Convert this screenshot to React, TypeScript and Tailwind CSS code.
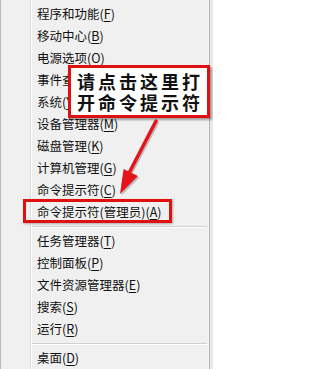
import React from 'react';

type Item = { label: string; key: string };

const groups: Item[][] = [
  [
    { label: '程序和功能', key: 'F' },
    { label: '移动中心', key: 'B' },
    { label: '电源选项', key: 'O' },
    { label: '事件查看器', key: 'V' },
    { label: '系统', key: 'Y' },
    { label: '设备管理器', key: 'M' },
    { label: '磁盘管理', key: 'K' },
    { label: '计算机管理', key: 'G' },
    { label: '命令提示符', key: 'C' },
    { label: '命令提示符(管理员)', key: 'A' },
  ],
  [
    { label: '任务管理器', key: 'T' },
    { label: '控制面板', key: 'P' },
    { label: '文件资源管理器', key: 'E' },
    { label: '搜索', key: 'S' },
    { label: '运行', key: 'R' },
  ],
  [{ label: '桌面', key: 'D' }],
];

const MenuRow: React.FC<{ item: Item }> = ({ item }) => (
  <div className="h-[22px] flex items-center pl-[5px] text-[12.5px] text-[#111] whitespace-nowrap">
    <span>{item.label}</span>
    <span>
      (<span className="underline underline-offset-2">{item.key}</span>)
    </span>
  </div>
);

export default function App() {
  return (
    <div
      className="relative w-[213px] h-[369px] overflow-hidden bg-[#e9e9e9]"
      style={{ fontFamily: '"Noto Sans CJK SC", "Noto Sans", sans-serif' }}
    >
      {/* 菜单主体 */}
      <div className="flex h-full w-[210px] bg-[#f0f0f0] border-l border-r border-[#b9b9b9]">
        <div className="w-[30px] shrink-0 border-r border-[#dcdcdc]" />
        <div className="flex-1 flex flex-col pt-[3px] border-l border-white">
          {groups.map((g, gi) => (
            <div key={gi} className="flex flex-col">
              {gi > 0 && (
                <div className="h-[7px] pt-[3px]">
                  <div className="h-px bg-[#cfcfcf] mr-[2px]" />
                  <div className="h-px bg-white mr-[2px]" />
                </div>
              )}
              {g.map((it) => (
                <MenuRow key={it.label} item={it} />
              ))}
            </div>
          ))}
        </div>
      </div>

      {/* 提示框 */}
      <div className="absolute left-[68px] top-[65px] w-[142px] h-[53px] bg-white border-[3px] border-[#e01010] shadow-[2px_2px_2px_rgba(0,0,0,0.35)] flex flex-col justify-center pl-[6px] text-[18px] leading-[21px] font-bold tracking-[3px] text-[#111]">
        <span>请点击这里打</span>
        <span>开命令提示符</span>
      </div>

      {/* 选中项红框 */}
      <div className="absolute left-[23px] top-[199px] w-[149px] h-[24px] border-[3px] border-[#e01010] shadow-[1px_1px_2px_rgba(0,0,0,0.3)]" />

      {/* 箭头 */}
      <svg className="absolute left-0 top-0" width="213" height="369" viewBox="0 0 213 369">
        <g transform="translate(1.5,1.5)" opacity="0.35">
          <path d="M156 121 L128 175" stroke="#555" strokeWidth="3" strokeLinecap="round" />
          <polygon points="120,194 123.6,168.9 137.9,176.1" fill="#555" />
        </g>
        <path d="M156 121 L128 175" stroke="#e5141b" strokeWidth="3.5" strokeLinecap="round" />
        <polygon points="120,194 123.6,168.9 137.9,176.1" fill="#e5141b" />
      </svg>
    </div>
  );
}
